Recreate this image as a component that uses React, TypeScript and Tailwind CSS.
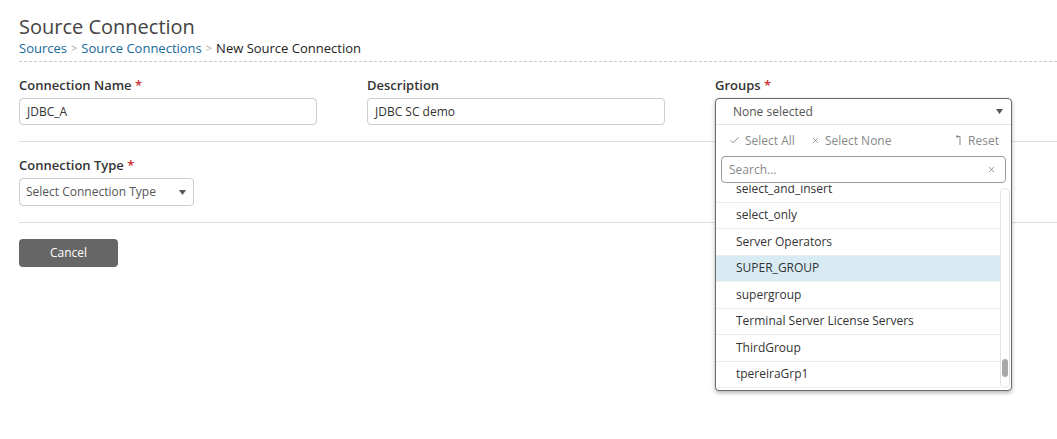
import { Check, X } from "lucide-react";

const groups = [
  "select_and_insert",
  "select_only",
  "Server Operators",
  "SUPER_GROUP",
  "supergroup",
  "Terminal Server License Servers",
  "ThirdGroup",
  "tpereiraGrp1",
];

function Label({ text, required }: { text: string; required?: boolean }) {
  return (
    <div className="text-[13px] leading-[20px] font-semibold text-[#333] mb-[3px]">
      {text}
      {required && <span className="text-[#c9302c]"> *</span>}
    </div>
  );
}

function Caret() {
  return (
    <svg width="7" height="5" viewBox="0 0 7 5" className="shrink-0">
      <path d="M0 0 L7 0 L3.5 5 Z" fill="#555" />
    </svg>
  );
}

function GroupsDropdown() {
  return (
    <div className="relative h-[27px]">
      <div className="absolute left-0 top-0 z-10 w-[297px] bg-white border border-[#6b6b6b] rounded-[4px] shadow-[0_2px_4px_rgba(0,0,0,0.3)] overflow-hidden">
        {/* trigger */}
        <div className="flex items-center justify-between h-[26px] pl-[17px] pr-[8px] border-b border-[#e6e6e6]">
          <span className="text-[12px] text-[#555]">None selected</span>
          <Caret />
        </div>

        {/* actions */}
        <div className="flex items-center h-[31px] pl-[13px] pr-[12px] text-[12px] text-[#888]">
          <span className="flex items-center gap-[5px]">
            <Check size={11} strokeWidth={1.6} className="text-[#666]" />
            Select All
          </span>
          <span className="flex items-center gap-[5px] ml-[16px]">
            <X size={9} strokeWidth={1.8} className="text-[#777]" />
            Select None
          </span>
          <span className="flex items-center gap-[6px] ml-auto">
            <svg width="8" height="11" viewBox="0 0 8 11">
              <path d="M6 10 V1.5 H2.5 M3.8 0.2 L2 1.5 L3.8 2.8" fill="none" stroke="#888" strokeWidth="1" />
            </svg>
            Reset
          </span>
        </div>

        {/* search */}
        <div className="px-[5px]">
          <div className="flex items-center justify-between h-[27px] border border-[#9a9a9a] rounded-[4px] pl-[7px] pr-[9px]">
            <span className="text-[12px] text-[#888]">Search...</span>
            <X size={9} strokeWidth={1.8} className="text-[#666]" />
          </div>
        </div>

        {/* list */}
        <div className="flex h-[205px] mt-[2px]">
          <div className="flex-1 overflow-hidden">
            <div className="-mt-[9px]">
              {groups.map((g) => (
                <div
                  key={g}
                  className={
                    "h-[26.5px] flex items-center pl-[20px] text-[12px] text-[#333] border-b border-[#eeeeee] " +
                    (g === "SUPER_GROUP" ? "bg-[#d8ebf3]" : "")
                  }
                >
                  {g}
                </div>
              ))}
            </div>
          </div>
          <div className="w-[11px] pt-[3px] pb-[2px] pr-[1px]">
            <div className="h-full border border-[#e2e2e2] rounded-[5px] flex flex-col justify-end pb-[10px] px-[1px]">
              <div className="h-[18px] rounded-[4px] bg-[#a9a9a9]" />
            </div>
          </div>
        </div>
      </div>
    </div>
  );
}

export default function App() {
  return (
    <div className="w-[1057px] h-[439px] bg-white pl-[19px] font-['Open_Sans',_'Liberation_Sans',_sans-serif] overflow-hidden">
      <div className="pt-[15px] pb-[5px] border-b border-dashed border-[#c8c8c8]">
        <h1 className="text-[20px] leading-[24px] text-[#444] font-normal">
          Source Connection
        </h1>
        <div className="text-[13px] leading-[16px] mt-[1px] flex items-center gap-[4px]">
          <span className="text-[#17699a]">Sources</span>
          <span className="text-[#aaa] text-[11px]">&gt;</span>
          <span className="text-[#17699a]">Source Connections</span>
          <span className="text-[#aaa] text-[11px]">&gt;</span>
          <span className="text-[#222]">New Source Connection</span>
        </div>
      </div>

      <div className="grid grid-cols-[298px_298px_297px] gap-x-[50px] pt-[13px] pb-[16px] border-b border-[#dddddd]">
        <div>
          <Label text="Connection Name" required />
          <div className="h-[27px] border border-[#cccccc] rounded-[4px] flex items-center px-[7px] text-[12px] text-[#333]">
            JDBC_A
          </div>
        </div>
        <div>
          <Label text="Description" />
          <div className="h-[27px] border border-[#cccccc] rounded-[4px] flex items-center px-[7px] text-[12px] text-[#333]">
            JDBC SC demo
          </div>
        </div>
        <div>
          <Label text="Groups" required />
          <GroupsDropdown />
        </div>
      </div>

      <div className="pt-[13px] pb-[16px] border-b border-[#dddddd]">
        <Label text="Connection Type" required />
        <div className="w-[175px] h-[28px] border border-[#cccccc] rounded-[4px] flex items-center justify-between pl-[6px] pr-[7px]">
          <span className="text-[12px] text-[#555]">Select Connection Type</span>
          <Caret />
        </div>
      </div>

      <button className="mt-[16px] w-[99px] h-[28px] rounded-[4px] bg-[#666666] text-white text-[12px] flex items-center justify-center">
        Cancel
      </button>
    </div>
  );
}
